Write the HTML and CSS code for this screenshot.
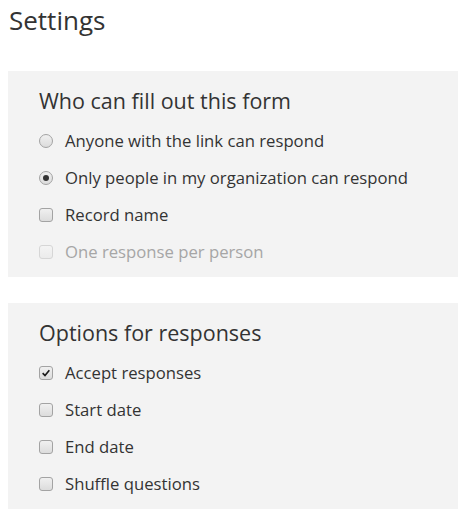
FILE: index.html
```html
<!DOCTYPE html>
<html lang="en">
<head>
    <meta charset="UTF-8">
    <meta name="viewport" content="width=device-width, initial-scale=1.0">
    <title>Settings</title>
    <link rel="stylesheet" href="styles.css">
</head>
<body>
    <h1 class="page-title">Settings</h1>

    <div class="panel">
        <h2>Who can fill out this form</h2>
        <label class="option">
            <span class="radio"></span>
            <span>Anyone with the link can respond</span>
        </label>
        <label class="option">
            <span class="radio checked"></span>
            <span>Only people in my organization can respond</span>
        </label>
        <label class="option">
            <span class="check"></span>
            <span>Record name</span>
        </label>
        <label class="option disabled">
            <span class="check"></span>
            <span>One response per person</span>
        </label>
    </div>

    <div class="panel">
        <h2>Options for responses</h2>
        <label class="option">
            <span class="check">
                <svg viewBox="0 0 12 12" width="10" height="10"><path d="M2 6.2 L4.8 9 L10 2.8" fill="none" stroke="#1a1a1a" stroke-width="2"/></svg>
            </span>
            <span>Accept responses</span>
        </label>
        <label class="option">
            <span class="check"></span>
            <span>Start date</span>
        </label>
        <label class="option">
            <span class="check"></span>
            <span>End date</span>
        </label>
        <label class="option">
            <span class="check"></span>
            <span>Shuffle questions</span>
        </label>
    </div>
</body>
</html>
```

FILE: styles.css
```css
body {
    font-family: "Open Sans", "Noto Sans", sans-serif;
    margin: 0;
    padding: 0 8px;
    background-color: #ffffff;
    color: #333;
}
.page-title {
    font-size: 26px;
    font-weight: 400;
    line-height: 34px;
    margin: 3px 0 34px 1px;
    color: #333;
}
.panel {
    background: #f3f3f3;
    padding: 16px 0 7px 31px;
    margin-bottom: 26px;
}
.panel h2 {
    font-size: 21.5px;
    font-weight: 400;
    line-height: 28px;
    margin: 0 0 7px 0;
    color: #333;
}
.option {
    display: flex;
    align-items: center;
    height: 37px;
    font-size: 16.7px;
    color: #333;
}
.option.disabled {
    color: #a6a6a6;
}
.radio, .check {
    width: 12px;
    height: 12px;
    margin: 0 12px 0 0;
    border: 1px solid #a3a3a3;
    background: linear-gradient(#f0f0f0, #dcdcdc);
    display: flex;
    align-items: center;
    justify-content: center;
    flex-shrink: 0;
}
.radio {
    border-radius: 50%;
}
.check {
    border-radius: 3px;
}
.radio.checked::after {
    content: "";
    width: 6px;
    height: 6px;
    border-radius: 50%;
    background: #333;
}
.disabled .check {
    border-color: #d6d6d6;
    background: linear-gradient(#f4f4f4, #ebebeb);
}
```
